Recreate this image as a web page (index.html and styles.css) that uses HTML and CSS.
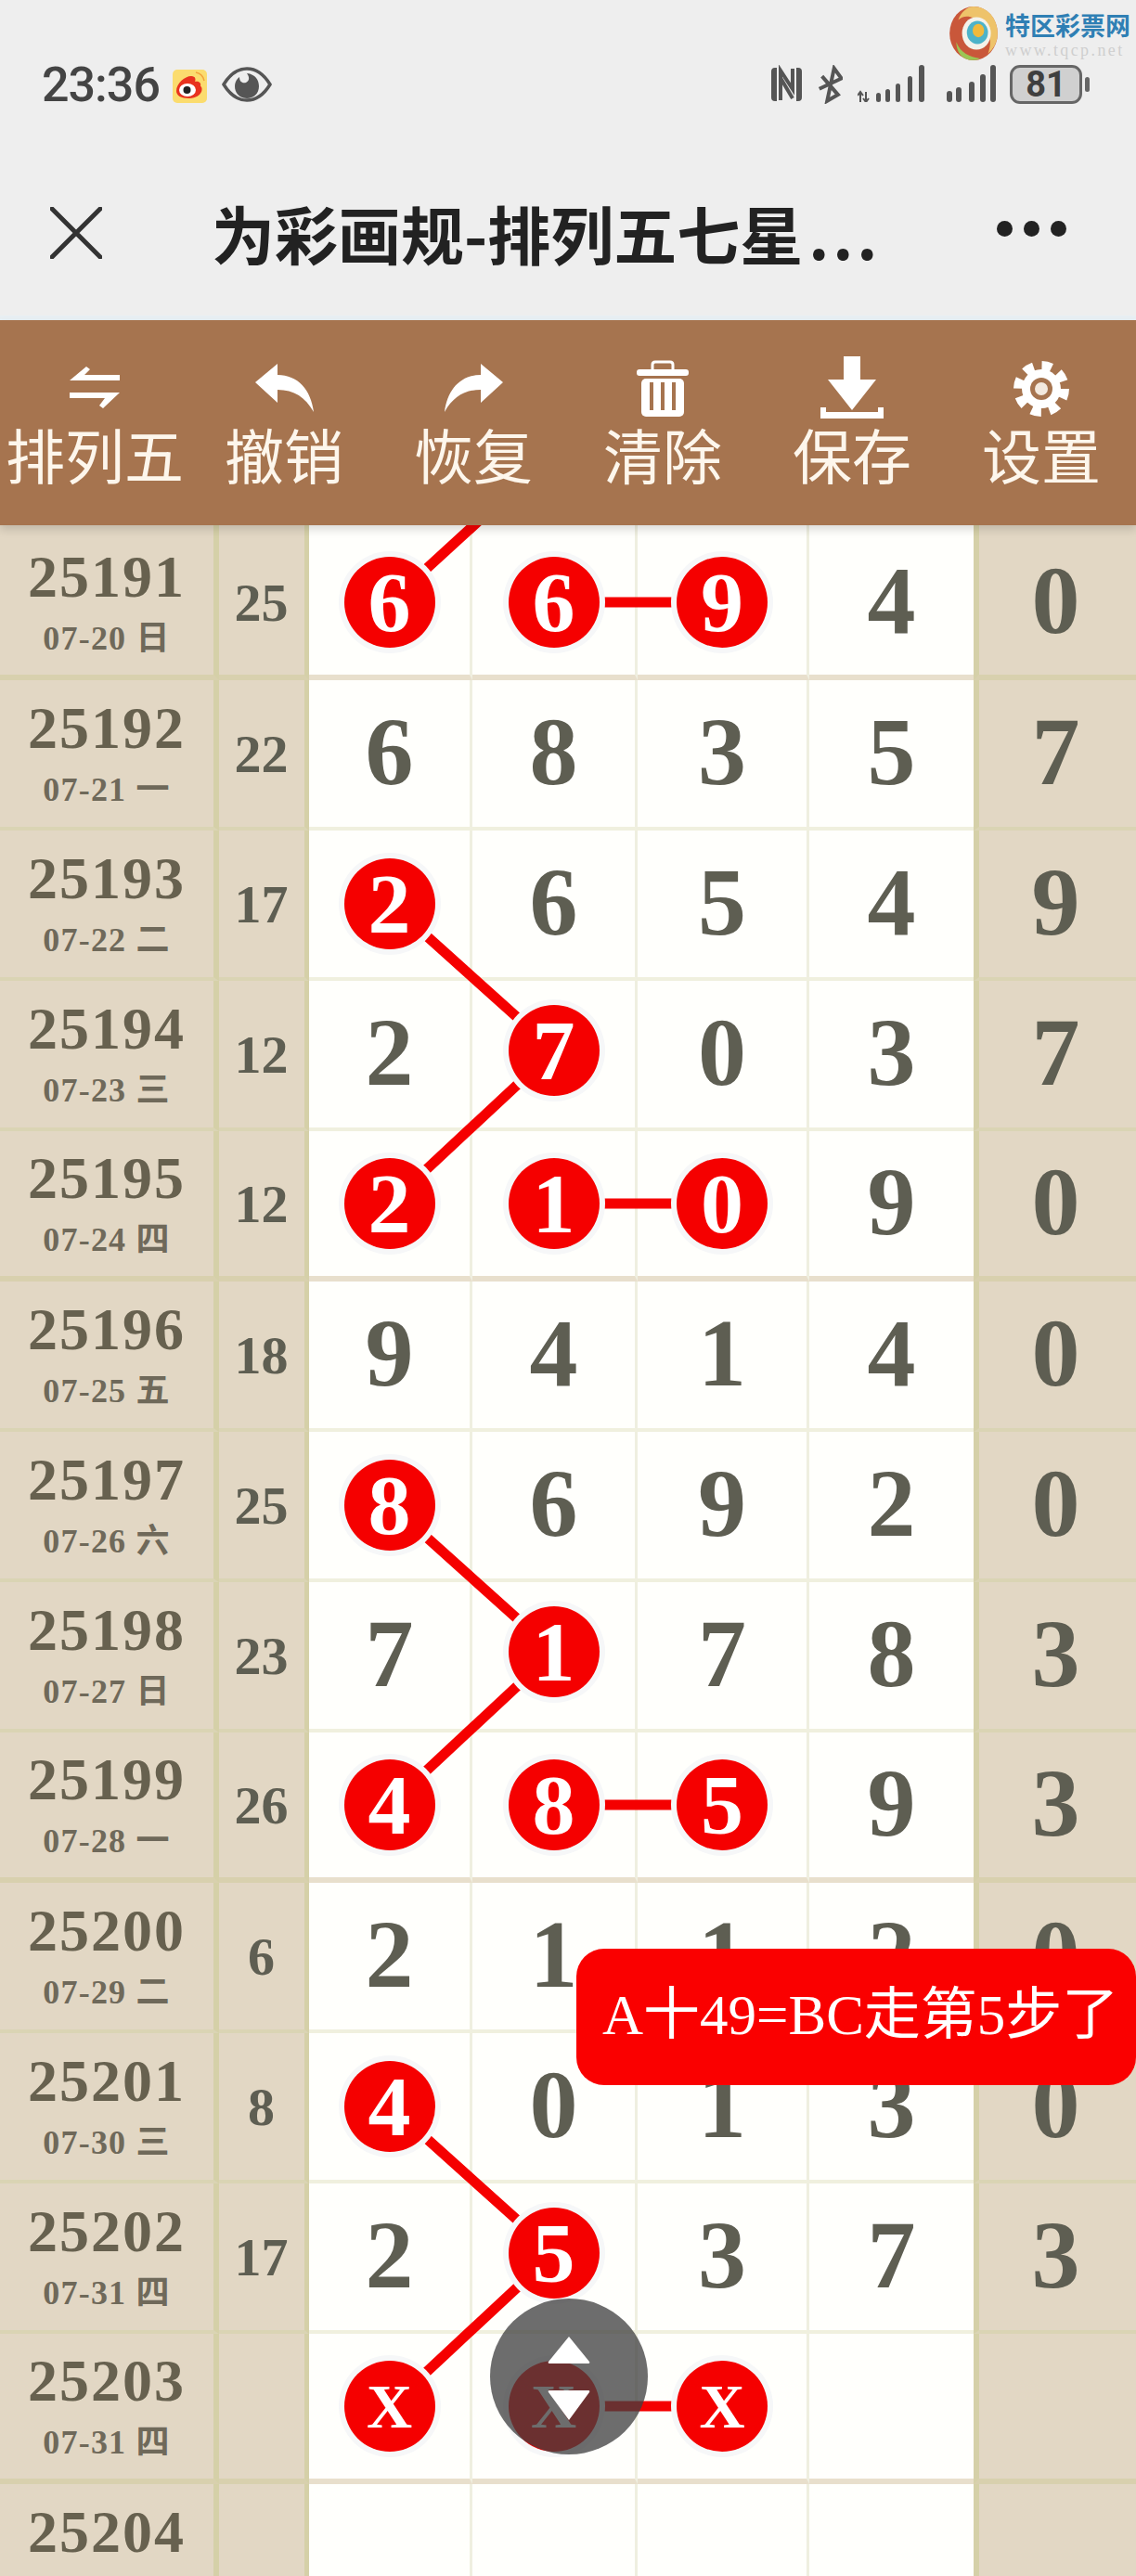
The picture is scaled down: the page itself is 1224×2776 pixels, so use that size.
FILE: index.html
```html
<!DOCTYPE html>
<html lang="zh">
<head>
    <meta charset="UTF-8">
    <title>为彩画规-排列五七星</title>
    <link rel="stylesheet" href="styles.css">
</head>
<body>
    <div class="top">
        <div class="status-bar">
            <span class="time">23:36</span>
            <svg class="weibo" viewBox="0 0 37 36">
                <rect width="37" height="36" y="0" rx="5" fill="#fbdc6e"/>
                <path d="M4 23C4 15 13 7 20 7C25 7 25 11 24 13C29 12 31 15 30 18C33 19 33 30 18 31C9 31 4 28 4 23Z" fill="#e8321e"/>
                <ellipse cx="16" cy="22" rx="9" ry="7" fill="#fff"/>
                <circle cx="15.5" cy="22" r="4" fill="#222"/>
                <path d="M25 3C30 4 33 7 34 12" fill="none" stroke="#f2a23a" stroke-width="1.5"/>
            </svg>
            <svg class="eye" viewBox="0 0 54 38">
                <path d="M2 19C10 6 19 2 27 2C35 2 44 6 52 19C44 32 35 36 27 36C19 36 10 32 2 19Z" fill="none" stroke="#555" stroke-width="3.5"/>
                <path d="M27 7C36 8 40 14 40 21C40 29 34 34 27 34C20 34 14 29 14 21C14 17 16 13 19 11C19 16 22 18 26 17C30 15 30 11 27 7Z" fill="#555"/>
            </svg>
            <span class="status-gap"></span>
            <svg class="nfc" viewBox="0 0 37 42">
                <path d="M8 3H6Q2 3 2 7V35Q2 39 6 39H8Z M29 3H31Q35 3 35 7V35Q35 39 31 39H29Z" fill="#555"/>
                <path d="M12 38V6L25 26V4" fill="none" stroke="#555" stroke-width="4"/>
                <path d="M12 14L25 36" fill="none" stroke="#555" stroke-width="4"/>
            </svg>
            <svg class="bt" viewBox="0 0 27 42">
                <path d="M3 14L24 30L14 39V3L24 12L3 28" fill="none" stroke="#555" stroke-width="4" transform="rotate(12 13 21)"/>
            </svg>
            <svg class="signal-a" viewBox="0 0 73 40">
                <path d="M3 40V30M0 33L3 29L6 33M9 29V39M6 36L9 40L12 36" fill="none" stroke="#555" stroke-width="2"/>
                <rect x="20" y="30" width="5" height="10" rx="2.5" fill="#555"/>
                <rect x="30" y="26" width="5" height="14" rx="2.5" fill="#555"/>
                <rect x="41" y="20" width="5" height="20" rx="2.5" fill="#555"/>
                <rect x="54" y="12" width="5" height="28" rx="2.5" fill="#555"/>
                <rect x="66" y="0" width="6" height="40" rx="3" fill="#555"/>
            </svg>
            <svg class="signal-b" viewBox="0 0 53 40">
                <rect x="0" y="28" width="6" height="12" rx="3" fill="#555"/>
                <rect x="10" y="24" width="6" height="16" rx="3" fill="#555"/>
                <rect x="24" y="18" width="6" height="22" rx="3" fill="#555"/>
                <rect x="36" y="10" width="6" height="30" rx="3" fill="#555"/>
                <rect x="47" y="0" width="6" height="40" rx="3" fill="#555"/>
            </svg>
            <span class="battery">81</span>
            <span class="battery-tip"></span>
        </div>
        <div class="nav-bar">
            <svg class="close" viewBox="0 0 56 56">
                <path d="M2 2L54 54M54 2L2 54" stroke="#333" stroke-width="5" stroke-linecap="round"/>
            </svg>
            <span class="title">为彩画规-排列五七星<span class="dots">...</span></span>
            <span class="more"><i></i><i></i><i></i></span>
        </div>
    </div>

    <div class="watermark">
        <svg class="logo" viewBox="0 0 52 58">
            <ellipse cx="26" cy="29" rx="25" ry="28" fill="#c9573a"/>
            <path d="M26 1C40 1 51 13 51 29C51 38 47 45 41 50C46 38 44 20 26 13C20 10 14 11 10 15C13 7 19 1 26 1Z" fill="#eec36a"/>
            <path d="M8 38C12 49 22 54 33 55C27 58 18 58 12 51C9 47 8 42 8 38Z" fill="#9cc654"/>
            <ellipse cx="29" cy="29" rx="15" ry="17" fill="#f4f2ea"/>
            <ellipse cx="30" cy="28" rx="11" ry="12" fill="#4db3c9"/>
            <ellipse cx="31" cy="26" rx="6" ry="7" fill="#f0b93c"/>
        </svg>
        <div class="mark-text">
            <b>特区彩票网</b>
            <span>www.tqcp.net</span>
        </div>
    </div>

    <div class="toolbar">
        <div class="tool">
            <svg class="tool-icon ic-swap" viewBox="0 0 54 45"><path d="M18 0L0 15H54V9H16L22 3Z M0 28H54L36 45L32 42L38 34H0Z" fill="#fff"/></svg>
            <span>排列五</span>
        </div>
        <div class="tool">
            <svg class="tool-icon ic-arrow" viewBox="0 0 63 52"><path d="M0 20L24 0V12C46 12 60 28 63 52C54 36 42 28 24 28V42Z" fill="#fff"/></svg>
            <span>撤销</span>
        </div>
        <div class="tool">
            <svg class="tool-icon ic-arrow" viewBox="0 0 63 52"><path d="M63 20L39 0V12C17 12 3 28 0 52C9 36 21 28 39 28V42Z" fill="#fff"/></svg>
            <span>恢复</span>
        </div>
        <div class="tool">
            <svg class="tool-icon ic-trash" viewBox="0 0 56 61">
                <path d="M17 10V5Q17 2 20 2H36Q39 2 39 5V10" fill="none" stroke="#fff" stroke-width="3"/>
                <rect y="10" width="56" height="7" rx="3" fill="#fff"/>
                <rect x="5" y="20" width="46" height="41" rx="5" fill="#fff"/>
                <rect x="14" y="24" width="4" height="30" fill="#a6744f"/>
                <rect x="26" y="24" width="4" height="30" fill="#a6744f"/>
                <rect x="38" y="24" width="4" height="30" fill="#a6744f"/>
            </svg>
            <span>清除</span>
        </div>
        <div class="tool">
            <svg class="tool-icon ic-save" viewBox="0 0 68 67"><path d="M25 0H43V25H60L34 58L8 25H25Z M0 55H6V60H62V55H68V67H0Z" fill="#fff"/></svg>
            <span>保存</span>
        </div>
        <div class="tool">
            <svg class="tool-icon ic-gear" viewBox="0 0 60 60">
                <circle cx="30" cy="30" r="21" fill="#fff"/>
                <circle cx="30" cy="30" r="25" fill="none" stroke="#fff" stroke-width="10" stroke-dasharray="10.6 9"/>
                <circle cx="30" cy="30" r="12" fill="#a6744f"/>
                <circle cx="30" cy="30" r="7" fill="#f3e9de"/>
            </svg>
            <span>设置</span>
        </div>
    </div>

    <div class="board">
        <svg class="links" viewBox="0 0 1224 2210">
            <path d="M420 83L597 -79M597 83H778"/>
            <path d="M420 407L597 566L420 731M597 731H778"/>
            <path d="M420 1055L597 1214L420 1379M597 1379H778"/>
            <path d="M420 1703L597 1862L420 2027M597 2027H778"/>
        </svg>

        <div class="row first thick">
            <div class="cell no"><b>25191</b><span>07-20 日</span></div>
            <div class="cell sum">25</div>
            <div class="cell num"><em>6</em></div><div class="cell num"><em>6</em></div><div class="cell num"><em>9</em></div><div class="cell num">4</div><div class="cell side">0</div>
        </div>
        <div class="row">
            <div class="cell no"><b>25192</b><span>07-21 一</span></div>
            <div class="cell sum">22</div>
            <div class="cell num">6</div><div class="cell num">8</div><div class="cell num">3</div><div class="cell num">5</div><div class="cell side">7</div>
        </div>
        <div class="row">
            <div class="cell no"><b>25193</b><span>07-22 二</span></div>
            <div class="cell sum">17</div>
            <div class="cell num"><em>2</em></div><div class="cell num">6</div><div class="cell num">5</div><div class="cell num">4</div><div class="cell side">9</div>
        </div>
        <div class="row">
            <div class="cell no"><b>25194</b><span>07-23 三</span></div>
            <div class="cell sum">12</div>
            <div class="cell num">2</div><div class="cell num"><em class="raised">7</em></div><div class="cell num">0</div><div class="cell num">3</div><div class="cell side">7</div>
        </div>
        <div class="row thick">
            <div class="cell no"><b>25195</b><span>07-24 四</span></div>
            <div class="cell sum">12</div>
            <div class="cell num"><em>2</em></div><div class="cell num"><em>1</em></div><div class="cell num"><em>0</em></div><div class="cell num">9</div><div class="cell side">0</div>
        </div>
        <div class="row">
            <div class="cell no"><b>25196</b><span>07-25 五</span></div>
            <div class="cell sum">18</div>
            <div class="cell num">9</div><div class="cell num">4</div><div class="cell num">1</div><div class="cell num">4</div><div class="cell side">0</div>
        </div>
        <div class="row">
            <div class="cell no"><b>25197</b><span>07-26 六</span></div>
            <div class="cell sum">25</div>
            <div class="cell num"><em>8</em></div><div class="cell num">6</div><div class="cell num">9</div><div class="cell num">2</div><div class="cell side">0</div>
        </div>
        <div class="row">
            <div class="cell no"><b>25198</b><span>07-27 日</span></div>
            <div class="cell sum">23</div>
            <div class="cell num">7</div><div class="cell num"><em class="raised">1</em></div><div class="cell num">7</div><div class="cell num">8</div><div class="cell side">3</div>
        </div>
        <div class="row thick">
            <div class="cell no"><b>25199</b><span>07-28 一</span></div>
            <div class="cell sum">26</div>
            <div class="cell num"><em>4</em></div><div class="cell num"><em>8</em></div><div class="cell num"><em>5</em></div><div class="cell num">9</div><div class="cell side">3</div>
        </div>
        <div class="row">
            <div class="cell no"><b>25200</b><span>07-29 二</span></div>
            <div class="cell sum">6</div>
            <div class="cell num">2</div><div class="cell num">1</div><div class="cell num">1</div><div class="cell num">2</div><div class="cell side">0</div>
        </div>
        <div class="row">
            <div class="cell no"><b>25201</b><span>07-30 三</span></div>
            <div class="cell sum">8</div>
            <div class="cell num"><em>4</em></div><div class="cell num">0</div><div class="cell num">1</div><div class="cell num">3</div><div class="cell side">0</div>
        </div>
        <div class="row">
            <div class="cell no"><b>25202</b><span>07-31 四</span></div>
            <div class="cell sum">17</div>
            <div class="cell num">2</div><div class="cell num"><em class="raised">5</em></div><div class="cell num">3</div><div class="cell num">7</div><div class="cell side">3</div>
        </div>
        <div class="row thick">
            <div class="cell no"><b>25203</b><span>07-31 四</span></div>
            <div class="cell sum"></div>
            <div class="cell num"><em class="unknown">X</em></div><div class="cell num"><em class="unknown">X</em></div><div class="cell num"><em class="unknown">X</em></div><div class="cell num"></div><div class="cell side"></div>
        </div>
        <div class="row">
            <div class="cell no"><b>25204</b><span></span></div>
            <div class="cell sum"></div>
            <div class="cell num"></div><div class="cell num"></div><div class="cell num"></div><div class="cell num"></div><div class="cell side"></div>
        </div>
    </div>

    <div class="toast">A十49=BC走第5步了</div>

    <div class="fab">
        <svg viewBox="0 0 50 93">
            <path d="M25 3L47 30Q48 32 46 32H4Q2 32 3 30Z M4 61H46Q48 61 47 63L25 93L3 63Q2 61 4 61Z" fill="#fff"/>
        </svg>
    </div>
</body>
</html>
```

FILE: styles.css
```css
* {
    box-sizing: border-box;
}
html, body {
    margin: 0;
    padding: 0;
}
body {
    position: relative;
    width: 1224px;
    height: 2776px;
    overflow: hidden;
    background-color: #eeeeee;
    font-family: "Liberation Serif", "Noto Sans CJK SC", serif;
}

/* status bar + title */
.top {
    height: 345px;
    border-bottom: 5px solid #e8eff3;
}
.status-bar {
    height: 170px;
    padding: 70px 50px 0 45px;
    display: flex;
    align-items: flex-start;
}
.time {
    font-family: Roboto, sans-serif;
    font-size: 52px;
    font-weight: 500;
    line-height: 43px;
    color: #444;
    letter-spacing: -1px;
}
.weibo {
    width: 37px;
    height: 36px;
    margin: 5px 0 0 14px;
}
.eye {
    width: 54px;
    height: 38px;
    margin: 2px 0 0 16px;
}
.status-gap {
    flex: 1;
}
.nfc {
    width: 37px;
    height: 42px;
}
.bt {
    width: 27px;
    height: 42px;
    margin-left: 15px;
}
.signal-a {
    width: 73px;
    height: 40px;
    margin-left: 16px;
}
.signal-b {
    width: 53px;
    height: 40px;
    margin-left: 23px;
}
.battery {
    width: 78px;
    height: 42px;
    margin-left: 15px;
    border: 3px solid #666;
    border-radius: 11px;
    background: #d0d0d0;
    font-family: Roboto, sans-serif;
    font-size: 38px;
    font-weight: 700;
    line-height: 36px;
    text-align: center;
    color: #3f3f3f;
}
.battery-tip {
    width: 5px;
    height: 16px;
    margin: 13px 0 0 3px;
    border-radius: 3px;
    background: #666;
}
.nav-bar {
    height: 170px;
    padding-left: 54px;
    display: flex;
    align-items: center;
    position: relative;
}
.close {
    width: 56px;
    height: 56px;
    margin-top: -8px;
}
.title {
    margin-left: 118px;
    margin-top: -8px;
    font-family: "Noto Sans CJK SC", sans-serif;
    font-size: 68px;
    font-weight: 700;
    line-height: 80px;
    color: #222;
    white-space: nowrap;
}
.dots {
    margin-left: 6px;
    letter-spacing: 4px;
}
.more {
    position: absolute;
    left: 1074px;
    top: 68px;
    display: flex;
    gap: 12px;
}
.more i {
    width: 17px;
    height: 17px;
    border-radius: 50%;
    background: #222;
}

/* site mark in the corner */
.watermark {
    position: absolute;
    left: 1022px;
    top: 6px;
    display: flex;
    gap: 7px;
}
.logo {
    width: 54px;
    height: 60px;
}
.mark-text {
    display: flex;
    flex-direction: column;
    padding-top: 4px;
}
.mark-text b {
    font-family: "Noto Sans CJK SC", sans-serif;
    font-size: 27px;
    line-height: 34px;
    color: #2f7fb4;
    white-space: nowrap;
}
.mark-text span {
    font-size: 18px;
    line-height: 20px;
    letter-spacing: 2.4px;
    color: #cfcfcf;
    white-space: nowrap;
}

/* brown toolbar */
.toolbar {
    position: relative;
    z-index: 5;
    height: 221px;
    background-color: #a6744f;
    box-shadow: 0 5px 9px rgba(0, 0, 0, 0.14);
    display: grid;
    grid-template-columns: repeat(6, 204px);
}
.tool {
    height: 221px;
    display: flex;
    flex-direction: column;
    align-items: center;
    justify-content: flex-end;
    padding-bottom: 42px;
    font-family: "Noto Sans CJK SC", sans-serif;
    font-size: 64px;
    line-height: 72px;
    color: #fdf6ec;
}
.tool-icon {
    margin-bottom: 2px;
}
.ic-swap {
    width: 54px;
    height: 45px;
    margin-bottom: 12px;
}
.ic-arrow {
    width: 63px;
    height: 52px;
    margin-bottom: 8px;
}
.ic-trash {
    width: 56px;
    height: 61px;
    margin-bottom: 3px;
}
.ic-save {
    width: 68px;
    height: 67px;
    margin-bottom: 1px;
}
.ic-gear {
    width: 60px;
    height: 60px;
    margin-bottom: 3px;
}

/* number table */
.board {
    position: relative;
    height: 2210px;
    overflow: hidden;
}
.links {
    position: absolute;
    left: 0;
    top: 0;
    width: 1224px;
    height: 2210px;
}
.links path {
    fill: none;
    stroke: #f50000;
    stroke-width: 11;
}
.row {
    display: grid;
    grid-template-columns: 236px 97px 176px 178px 185px 177px 175px;
    height: 162px;
}
.row.first {
    height: 167px;
}
.row.first .cell {
    padding-top: 5px;
}
.cell {
    display: flex;
    align-items: center;
    justify-content: center;
    border-bottom: 4px solid #f0f0de;
    font-weight: 700;
    color: #5e5e52;
}
.no, .sum, .side {
    background-color: #e2d7c4;
    border-bottom-color: #dad4b4;
}
.row.thick .cell {
    border-bottom: 6px solid #e8dfcc;
}
.row.thick .no, .row.thick .sum, .row.thick .side {
    border-bottom-color: #d8d0ae;
}
.no {
    flex-direction: column;
    border-right: 6px solid #d5d0a8;
    color: #67614f;
}
.no b {
    font-size: 64px;
    line-height: 78px;
    letter-spacing: 2px;
}
.no span {
    font-size: 36px;
    line-height: 54px;
    height: 54px;
    letter-spacing: 1.2px;
    color: #6f695a;
}
.sum {
    border-right: 5px solid #d5d0a8;
    font-size: 58px;
    padding-right: 1px;
}
.num {
    background-color: #fffffc;
    border-right: 3px solid #efefe0;
    font-size: 104px;
    padding-bottom: 6px;
}
.num:nth-child(6) {
    border-right: none;
}
.side {
    border-left: 6px solid #d5d0a8;
    font-size: 104px;
    padding: 0 4px 6px 0;
}
.num em {
    position: relative;
    z-index: 2;
    width: 98px;
    height: 98px;
    margin-top: 5px;
    display: flex;
    align-items: center;
    justify-content: center;
    border-radius: 50%;
    background-color: #f50000;
    box-shadow: 0 0 0 6px #f6f7f8;
    font-size: 92px;
    font-style: normal;
    line-height: 98px;
    color: #fff;
}
.num em.raised {
    margin-top: -3px;
}
.num em.unknown {
    font-size: 68px;
}

/* things on top of the table */
.toast {
    position: absolute;
    z-index: 6;
    left: 621px;
    top: 2100px;
    width: 603px;
    height: 147px;
    border-radius: 30px;
    background-color: #fa0000;
    padding: 0 0 16px 28px;
    display: flex;
    align-items: center;
    font-size: 61px;
    color: #fff;
    white-space: nowrap;
}
.fab {
    position: absolute;
    z-index: 7;
    left: 528px;
    top: 2477px;
    width: 170px;
    height: 168px;
    border-radius: 50%;
    background-color: rgba(63, 63, 63, 0.76);
    display: flex;
    align-items: center;
    justify-content: center;
}
.fab svg {
    width: 50px;
    height: 93px;
}
```
